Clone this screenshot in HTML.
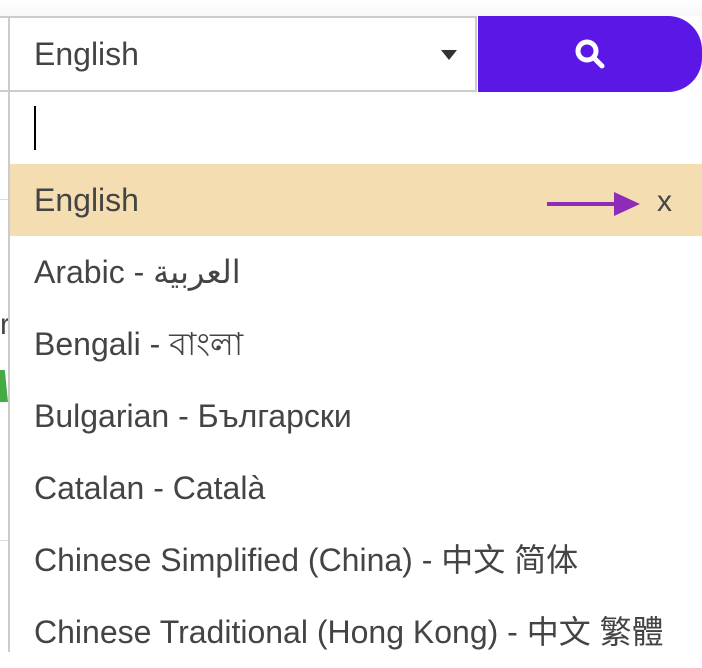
<!DOCTYPE html>
<html><head><meta charset="utf-8"><style>
*{margin:0;padding:0;box-sizing:border-box}
body{width:702px;height:644px;overflow:hidden;background:#fff;position:relative;font-family:"Liberation Sans","Noto Sans CJK SC",sans-serif;color:#444}
.abs{position:absolute}
.item{position:absolute;left:34px;font-size:32px;line-height:72px;height:72px;white-space:nowrap}
</style></head><body>
<div class="abs" style="left:0;top:0;width:702px;height:16px;background:linear-gradient(#fff,#f7f7f9)"></div>
<div class="abs" style="left:0;top:16px;width:10px;height:2px;background:#ccc"></div>
<div class="abs" style="left:0;top:90px;width:10px;height:2px;background:#ccc"></div>
<div class="abs" style="left:0;top:199px;width:10px;height:1px;background:#ddd"></div>
<div class="abs" style="left:0;top:540px;width:10px;height:1px;background:#ddd"></div>
<div class="abs" style="left:0;top:308px;font-size:30px;color:#444">r</div>
<div class="abs" style="left:0;top:370px;width:8px;height:32px;background:#4a4;clip-path:polygon(0 0,60% 0,100% 100%,0 100%)"></div>
<div class="abs" style="left:8px;top:16px;width:469px;height:76px;border:2px solid #ccc;background:#fff"></div>
<div class="abs" style="left:34px;top:34px;font-size:32px;line-height:40px">English</div>
<div class="abs" style="left:441px;top:50px;width:0;height:0;border-left:8px solid transparent;border-right:8px solid transparent;border-top:10px solid #333"></div>
<div class="abs" style="left:478px;top:16px;width:224px;height:76px;background:#5b17e6;border-radius:0 34px 34px 0"></div>
<svg class="abs" style="left:572px;top:36px" width="36" height="36" viewBox="0 0 36 36"><circle cx="15" cy="15" r="9" fill="none" stroke="#fff" stroke-width="5"/><line x1="22" y1="22" x2="30" y2="30" stroke="#fff" stroke-width="5" stroke-linecap="round"/></svg>
<div class="abs" style="left:8px;top:92px;width:694px;height:560px;border-left:2px solid #ccc;background:#fff"></div>
<div class="abs" style="left:34px;top:106px;width:2px;height:44px;background:#000"></div>
<div class="abs" style="left:10px;top:164px;width:692px;height:72px;background:#f4ddb1"></div>
<div class="item" style="top:164px">English</div>
<div class="abs" style="left:547px;top:202px;width:70px;height:4px;background:#8e2bb8"></div>
<div class="abs" style="left:614px;top:192px;width:0;height:0;border-top:12px solid transparent;border-bottom:12px solid transparent;border-left:26px solid #8e2bb8"></div>
<div class="abs" style="left:657px;top:182px;font-size:30px;line-height:40px">x</div>
<div class="item" style="top:236px">Arabic - <span style="font-family:'DejaVu Sans',serif">العربية</span></div>
<div class="item" style="top:308px">Bengali - বাংলা</div>
<div class="item" style="top:380px">Bulgarian - Български</div>
<div class="item" style="top:452px">Catalan - Català</div>
<div class="item" style="top:524px">Chinese Simplified (China) - 中文 简体</div>
<div class="item" style="top:596px">Chinese Traditional (Hong Kong) - 中文 繁體</div>
</body></html>
